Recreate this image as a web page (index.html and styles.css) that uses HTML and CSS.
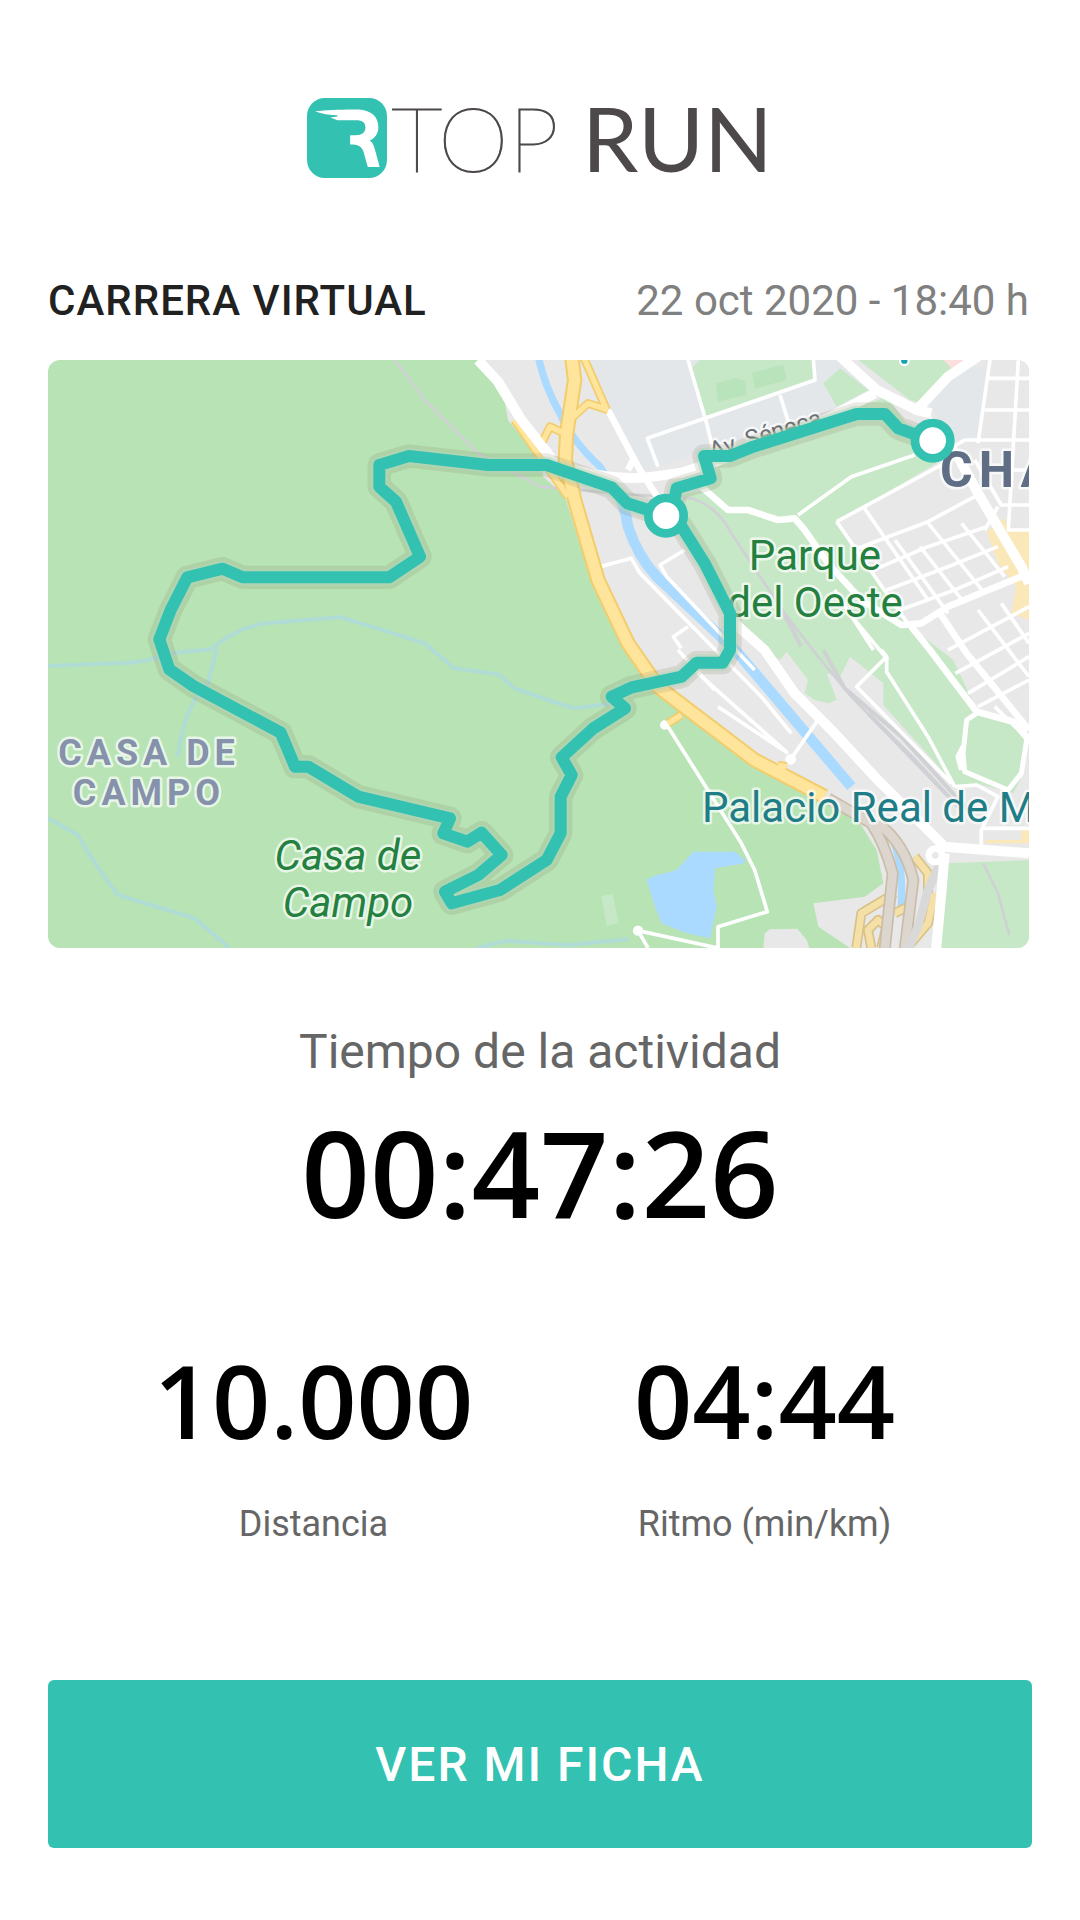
FILE: index.html
```html
<!DOCTYPE html>
<html lang="es">
<head>
    <meta charset="UTF-8">
    <meta name="viewport" content="width=device-width, initial-scale=1.0">
    <title>Top Run - Carrera virtual</title>
    <link rel="stylesheet" href="styles.css">
</head>
<body>
    <div class="page">
        <!-- Logo -->
        <header class="brand">
            <svg class="brand-mark" viewBox="0 0 241 241" aria-hidden="true">
                <rect width="241" height="241" rx="54" fill="#33c1b1"/>
                <path fill="#fff" d="M24 40 C60 37 110 34 155 35 C195 37 215 58 215 88 C215 108 203 123 188 128 C197 132 201 141 204 153 L219 208 H183 L170 161 C165 145 153 140 130 140 V112 H146 C166 112 176 104 176 89 C176 74 167 67 148 67 H92 L70 59 L91 56 L92 52 C68 52 44 48 24 40 Z"/>
            </svg>
            <p class="brand-name"><span class="brand-top">TOP</span> <span class="brand-run">RUN</span></p>
        </header>

        <main class="activity">
            <div class="race">
                <h1 class="race-title">CARRERA VIRTUAL</h1>
                <time class="race-date" datetime="2020-10-22T18:40">22 oct 2020 - 18:40 h</time>
            </div>

            <!-- Mapa del recorrido -->
            <svg class="map" viewBox="0 0 981 588" role="img" aria-label="Mapa del recorrido">
                <g transform="scale(.333333)">
                    <rect class="wood" width="2943" height="1764"/>

                    <!-- zona urbana -->
                    <path class="urban" d="M1306 0 L1371 130 L1380 180 L1476 300 L1486 350 L1551 410 L1626 650 L1740 870 L1826 1000 L2116 1220 L2326 1320 L2436 1390 L2486 1470 L2506 1570 L2450 1610 L2296 1630 L2311 1700 L2406 1764 H2943 V0 Z"/>
                    <path class="urban" d="M2146 1764 L2150 1720 L2166 1708 L2248 1706 L2276 1740 L2284 1764 Z"/>
                    <path class="campus" d="M1616 0 H2380 L2480 90 L2320 170 L1970 270 L1780 340 L1690 170 Z M2640 130 L2740 20 H2816 L2796 240 H2730 Z"/>

                    <!-- parques -->
                    <path class="park" d="M1931 25 L1956 0 H2296 L2301 60 L1968 170 Z M2326 70 L2376 25 L2461 90 L2366 140 Z M2431 0 H2691 L2721 30 L2626 130 L2586 120 Z"/>
                    <path class="park" d="M1996 310 L2376 160 L2516 110 L2606 230 L2666 310 L2366 485 L2426 570 L2556 770 L2586 800 L2716 900 L2786 1050 L2896 1090 L2936 1140 L2926 1240 L2896 1300 L2786 1270 L2726 1280 L2506 1035 V970 L2406 890 L2376 950 L2336 940 L2366 1020 L2340 1030 L2300 1020 L2270 1000 L2280 960 L2216 875 L2196 900 L2150 870 L2076 780 L1916 510 L1856 410 L1976 390 Z"/>
                    <path class="park" d="M2696 1510 L2943 1500 V1764 H2671 Z M1660 1608 L1694 1602 L1712 1690 L1676 1698 Z"/>
                    <path class="field" d="M2004 70 L2040 60 L2060 54 L2092 62 L2096 105 L2010 125 Z M2112 38 L2206 14 L2216 60 L2120 86 Z"/>
                    <path fill="#fadfdc" d="M2686 0 H2752 L2712 26 Z"/>
                    <path fill="#fbe8b8" d="M2816 515 L2870 475 L2880 510 H2943 V780 L2890 760 L2905 680 L2850 610 Z"/>
                    <path fill="#fbe8b8" d="M2806 1450 H2943 V1410 H2920 V1440 H2816 Z"/>

                    <!-- agua -->
                    <path class="lake" d="M1796 1560 L1811 1550 L1886 1530 L1936 1475 H2061 L2091 1500 L2088 1510 L2001 1525 L1996 1590 L2006 1640 L1986 1735 L1916 1720 L1841 1690 L1821 1640 Z"/>
                    <path class="river river-high" d="M1471 -10 Q1490 80 1536 160 Q1570 240 1656 320 L1715 410"/>
                    <path class="river" d="M1705 395 Q1730 430 1740 500 Q1770 590 1826 650 L2066 875 L2410 1280"/>
                    <path class="river river-high" d="M2536 1440 Q2566 1520 2560 1640"/>
                    <path class="creek" d="M0 918 L240 908 Q300 905 380 878 L490 868 Q560 805 650 790 L880 772 Q1020 815 1130 850 L1218 925 L1350 943 L1400 985 L1500 1020 L1580 1045 L1700 1030"/>
                    <path class="creek" d="M506 868 Q490 930 480 970 L440 1020 Q400 1090 390 1190"/>
                    <path class="creek" d="M0 1375 L90 1425 Q130 1500 210 1605 L440 1675 L545 1764"/>
                    <path class="creek" d="M1286 1764 L1376 1742 Q1500 1752 1560 1755 L1740 1738"/>

                    <!-- ferrocarril -->
                    <path class="rail" d="M1040 0 L1130 120 L1290 280 L1476 380 L1700 400 L1930 415 Q2010 440 2050 520 L2210 760 L2310 890 L2410 1010 L2700 1310"/>
                    <path class="rail rail-yard" d="M2326 870 L2390 985 L2560 1130 L2760 1350 M2460 1060 L2600 1200 L2740 1350 M2180 710 L2260 860"/>
                    <path class="rail" d="M2806 1510 L2850 1600 L2884 1725"/>

                    <!-- calles secundarias -->
                    <g class="street">
                        <path d="M1920 0 L1976 190 L2000 290 M1830 320 L1798 235 L2301 60 L2296 0 M2196 105 L2224 195"/>
                        <path d="M2366 485 L2680 315 M2366 485 L2425 570 L2600 820 M2446 440 L2640 720 M2541 540 L2700 760 M2616 560 L2750 730 M2641 490 L2810 700 M2741 490 L2870 650"/>
                        <path d="M2416 570 L2640 485 L2780 410 M2476 630 L2640 560 L2816 500 M2516 690 L2700 620 L2850 560 M2556 750 L2720 690 L2880 620"/>
                        <path d="M2826 0 L2790 250 M2911 0 L2881 510 H2943 M2816 55 H2943 M2811 150 H2943 M2700 270 L2750 240 H2943 M2780 300 L2860 435 H2943 M2830 330 H2943 M2850 440 L2810 510"/>
                        <path d="M2700 870 L2943 740 M2722 940 L2943 820 M2760 1000 L2943 890 M2790 1040 L2943 960 M2790 750 L2943 950 M2860 730 L2943 850 M2840 1040 L2943 1140"/>
                        <path d="M2250 465 L2410 350 L2600 285"/>
                        <path d="M1656 620 L1750 595 L1776 640 L2140 1010 L2230 1120 M2010 1040 L2220 1180 M1910 570 L1836 615 L1856 650 L2120 930 M1920 800 L1876 830 L1900 865 M1950 940 L2220 1180 M1890 870 L2000 990"/>
                        <path d="M2230 1195 L2310 1080 M1860 1100 L2080 1450 L2120 1530 L2158 1655 L2010 1700 V1764 L1770 1712 L1800 1764"/>
                        <path d="M2500 870 L2516 890 L2426 980 L2710 1270 M2516 890 V935 L2640 1130 L2720 1280 M2420 780 L2520 900 M2360 690 L2476 870"/>
                        <path d="M2720 1280 L2786 1275 L2850 1310 L2800 1410 V1470 M2800 1405 H2943"/>
                    </g>
                    <path class="street street-md" d="M2786 1060 L2756 1080 L2745 1180 L2750 1235 L2880 1290 L2920 1240 L2936 1140 M2745 1160 L2730 1190 L2740 1230"/>

                    <!-- avenidas -->
                    <path class="avenue" d="M1290 0 L1350 65 L1420 180 L1500 280"/>
                    <path class="avenue" d="M1476 275 Q1520 320 1600 335 Q1700 360 1800 352 L1900 338 L1990 310 L2300 195 L2480 100"/>
                    <path class="avenue avenue-md" d="M1680 150 L1770 320 L1840 430 M1740 330 L1760 290"/>
                    <path class="avenue avenue-md" d="M1960 380 L2040 450 L2100 450 L2190 480 L2240 475 L2270 510 L2340 610 L2440 720 L2560 795 L2620 790 L2700 740 L2943 640"/>
                    <path class="avenue" d="M2376 -10 L2486 90 L2606 150 L2650 160 M2606 150 L2700 50 L2790 -10 M2640 180 L2730 290 L2790 400 L2920 620 L2943 670"/>
                    <path class="avenue" d="M2020 700 L2060 790 L2150 870 L2240 1000 L2360 1120 L2480 1250 L2690 1460 L2943 1480"/>
                    <path class="avenue avenue-md" d="M2590 800 L2646 870 L2786 1055 L2896 1085 L2943 1140 M2676 760 L2756 880 L2943 1110"/>
                    <circle cx="1850" cy="1095" r="14" fill="#fff"/>
                    <circle cx="2228" cy="1198" r="16" fill="#fff"/>
                    <circle class="street" cx="1770" cy="1712" r="10"/>

                    <!-- autovía -->
                    <g class="motorway-edge">
                        <path class="ramp" d="M1606 -10 L1676 150 M1576 170 L1620 130 L1680 150 M1481 250 L1506 200 L1560 225 M1400 180 L1560 410 M1860 1090 L1900 1065 M2190 1215 L2216 1220"/>
                        <path d="M1571 -10 L1580 60 L1556 220 L1552 300 L1580 420 L1650 660 L1740 850 L1830 980 L2120 1200 L2330 1310"/>
                    </g>
                    <g class="motorway">
                        <path class="ramp" d="M1606 -10 L1676 150 M1576 170 L1620 130 L1680 150 M1481 250 L1506 200 L1560 225 M1400 180 L1560 410 M1860 1090 L1900 1065 M2190 1215 L2216 1220"/>
                        <path d="M1571 -10 L1580 60 L1556 220 L1552 300 L1580 420 L1650 660 L1740 850 L1830 980 L2120 1200 L2330 1310"/>
                    </g>
                    <path class="avenue" d="M1350 65 L1420 180 L1510 295"/>

                    <!-- túneles M-30 -->
                    <path class="exit-edge" d="M2425 1764 L2440 1660 L2540 1600 M2470 1764 L2460 1710 L2490 1680 L2515 1700 L2500 1764 M2580 1760 L2640 1690 L2660 1600 M2600 1490 L2640 1540 L2640 1620 M2540 1660 L2580 1640"/>
                    <path class="exit" d="M2425 1764 L2440 1660 L2540 1600 M2470 1764 L2460 1710 L2490 1680 L2515 1700 L2500 1764 M2580 1760 L2640 1690 L2660 1600 M2600 1490 L2640 1540 L2640 1620 M2540 1660 L2580 1640"/>
                    <path class="tunnel-edge" d="M2340 1315 L2470 1390 Q2510 1450 2534 1540 L2510 1770 M2490 1390 Q2570 1450 2596 1560 L2570 1770"/>
                    <path class="tunnel" d="M2340 1315 L2470 1390 Q2510 1450 2534 1540 L2510 1770 M2490 1390 Q2570 1450 2596 1560 L2570 1770"/>
                    <path class="tunnel tunnel-gray" d="M2680 1500 L2640 1590 L2610 1700 L2580 1770"/>
                    <path class="avenue" d="M2690 1480 L2680 1600 L2664 1770"/>
                    <circle class="avenue avenue-md" cx="2662" cy="1486" r="20"/>

                    <circle cx="2569" cy="2" r="13" fill="#12a4af" stroke="#fff" stroke-width="7"/>
                </g>

                <text class="label label-street" transform="translate(664 99) rotate(-17)">Av. Séneca</text>

                <text class="label label-park" x="767" y="210">Parque</text>
                <text class="label label-park" x="767" y="257">del Oeste</text>
                <text class="label label-district" x="892" y="127">CHA</text>
                <text class="label label-place" x="654" y="462">Palacio Real de M</text>
                <text class="label label-zone" x="101" y="405">CASA DE</text>
                <text class="label label-zone" x="101" y="445">CAMPO</text>
                <text class="label label-park label-wood" x="300" y="510">Casa de</text>
                <text class="label label-park label-wood" x="300" y="557">Campo</text>

                <!-- recorrido -->
                <defs>
                    <path id="track" d="M2654 242 L2551 205 L2511 162 H2426 L2116 260 L2046 288 H1968 L1988 355 L1886 385 L1881 410 L1854 467 L1901 500 L1970 610 L2046 760 V870 L2024 908 H1946 L1901 950 L1751 982 L1691 1010 L1731 1045 L1636 1105 L1541 1192 L1571 1245 L1538 1310 V1420 L1496 1500 L1356 1590 L1211 1630 L1191 1595 L1291 1545 L1361 1485 L1301 1418 L1258 1445 L1186 1420 L1206 1375 L931 1310 L781 1220 H741 L698 1118 L436 978 L364 928 L334 838 L368 750 L418 652 L524 626 L584 652 H1024 L1116 590 L1044 425 L994 380 V315 L1083 288 L1321 315 H1496 L1691 382 L1738 430 L1854 467"/>
                </defs>
                <g transform="scale(.333333)">
                    <use href="#track" class="track-shadow"/>
                    <use href="#track" class="track-halo"/>
                    <use href="#track" class="track"/>
                    <circle class="stop" cx="2654" cy="242" r="53"/>
                    <circle class="stop" cx="1854" cy="467" r="53"/>
                </g>
            </svg>

            <!-- Tiempo -->
            <section class="time">
                <h2 class="time-label">Tiempo de la actividad</h2>
                <p class="time-value">00:47:26</p>
            </section>

            <!-- Datos -->
            <dl class="stats">
                <div class="stat">
                    <dt class="stat-label">Distancia</dt>
                    <dd class="stat-value">10.000</dd>
                </div>
                <div class="stat">
                    <dt class="stat-label">Ritmo (min/km)</dt>
                    <dd class="stat-value">04:44</dd>
                </div>
            </dl>
        </main>

        <button class="btn" type="button">VER MI FICHA</button>
    </div>
</body>
</html>
```
FILE: styles.css
```css
:root {
    --teal: #33c1b1;
    --ink: #212121;
    --muted: #808080;
    --label: #666666;
}

* {
    margin: 0;
    padding: 0;
    box-sizing: border-box;
}

body {
    font-family: Roboto, 'Liberation Sans', sans-serif;
    background: #fff;
    color: #000;
}

.page {
    min-height: 100vh;
    padding: 98px 48px 72px;
    display: flex;
    flex-direction: column;
}

/* Logo */
.brand {
    display: flex;
    justify-content: center;
    align-items: flex-start;
    gap: 4px;
    height: 80px;
    margin-bottom: 99px;
}

.brand-mark {
    width: 80px;
    height: 80px;
    flex: none;
}

.brand-name {
    font-family: Lato, 'Liberation Sans', sans-serif;
    font-size: 90px;
    line-height: 78px;
    color: #4d4849;
    white-space: nowrap;
}

.brand-top {
    font-weight: 100;
    -webkit-text-stroke: 1px #4d4849;
}

.brand-run {
    font-weight: 400;
}

/* Cabecera de la carrera */
.race {
    display: flex;
    justify-content: space-between;
    align-items: baseline;
    margin: 0 3px 35px 0;
    font-size: 42px;
    line-height: 48px;
}

.race-title {
    font-size: 42px;
    font-weight: 500;
    letter-spacing: 1px;
    color: var(--ink);
}

.race-date {
    color: var(--muted);
}

/* Mapa */
.map {
    display: block;
    width: calc(100% - 3px);
    height: auto;
    border-radius: 12px;
    overflow: hidden;
}

.map path,
.map use {
    stroke-linejoin: round;
}

.wood { fill: #b7e3b5; }
.urban { fill: #e8e8e8; }
.campus { fill: #e3e7ea; }
.park { fill: #c6e8c6; }
.field { fill: #b9e3bb; }
.lake { fill: #aadaff; }

.river,
.creek,
.rail,
.street,
.avenue,
.motorway,
.motorway-edge,
.exit,
.exit-edge,
.tunnel,
.tunnel-edge {
    fill: none;
}

.river {
    stroke: #aadaff;
    stroke-width: 32;
}

.river-high {
    stroke-width: 22;
}

.creek {
    stroke: #b0dcd6;
    stroke-width: 12;
}

.rail {
    stroke: #cfd1d4;
    stroke-width: 8;
}

.rail-yard {
    stroke-width: 12;
}

.street {
    stroke: #fff;
    stroke-width: 11;
}

.street-md {
    stroke-width: 15;
}

.avenue {
    stroke: #fff;
    stroke-width: 30;
}

.avenue-md {
    stroke-width: 20;
}

.motorway-edge {
    stroke: #f3cc6b;
    stroke-width: 46;
}

.motorway-edge .ramp {
    stroke-width: 26;
}

.motorway {
    stroke: #ffe59b;
    stroke-width: 34;
}

.motorway .ramp {
    stroke-width: 16;
}

.exit-edge {
    stroke: #d9c28a;
    stroke-width: 30;
}

.exit {
    stroke: #f5e0a8;
    stroke-width: 20;
}

.tunnel-edge {
    stroke: #c9bda9;
    stroke-width: 36;
}

.tunnel {
    stroke: #dcd6ce;
    stroke-width: 26;
}

.tunnel-gray {
    stroke: #d9d9da;
}

.label {
    font-size: 42px;
    paint-order: stroke;
    stroke: rgba(255, 255, 255, 0.7);
    stroke-width: 5px;
    stroke-linejoin: round;
}

.label-park {
    fill: #24803f;
    text-anchor: middle;
}

.label-wood {
    font-style: italic;
}

.label-place {
    fill: #1f7d87;
}

.label-zone {
    fill: #8691ab;
    font-size: 36px;
    font-weight: 700;
    letter-spacing: 5px;
    text-anchor: middle;
}

.label-district {
    fill: #5f6e85;
    font-size: 50px;
    font-weight: 700;
    letter-spacing: 6px;
}

.label-street {
    fill: #6b7078;
    font-size: 24px;
}

.track-shadow,
.track-halo,
.track {
    fill: none;
}

.track-shadow {
    stroke: rgba(130, 120, 90, 0.16);
    stroke-width: 70;
}

.track-halo {
    stroke: rgba(175, 218, 185, 0.5);
    stroke-width: 50;
}

.track {
    stroke: var(--teal);
    stroke-width: 36;
}

.stop {
    fill: #fff;
    stroke: var(--teal);
    stroke-width: 26;
}

/* Tiempo */
.time {
    margin-top: 76px;
    text-align: center;
}

.time-label {
    font-size: 48px;
    font-weight: 400;
    line-height: 56px;
    color: var(--label);
}

.time-value {
    margin-top: 22px;
    font-family: 'Open Sans', 'Noto Sans', sans-serif;
    font-size: 120px;
    font-weight: 600;
    line-height: 140px;
}

/* Datos */
.stats {
    display: grid;
    grid-template-columns: 1fr 1fr;
    margin-top: 98px;
    padding: 0 42px 0 40px;
    text-align: center;
}

.stat {
    display: flex;
    flex-direction: column-reverse;
    gap: 42px;
}

.stat-value {
    font-family: 'Open Sans', 'Noto Sans', sans-serif;
    font-size: 102px;
    font-weight: 600;
    line-height: 120px;
}

.stat-label {
    font-size: 36px;
    line-height: 44px;
    color: var(--label);
}

/* Botón */
.btn {
    width: 100%;
    height: 168px;
    margin-top: auto;
    border: none;
    border-radius: 6px;
    background: var(--teal);
    color: #fff;
    font-family: inherit;
    font-size: 48px;
    font-weight: 500;
    letter-spacing: 2px;
    cursor: pointer;
}
```
